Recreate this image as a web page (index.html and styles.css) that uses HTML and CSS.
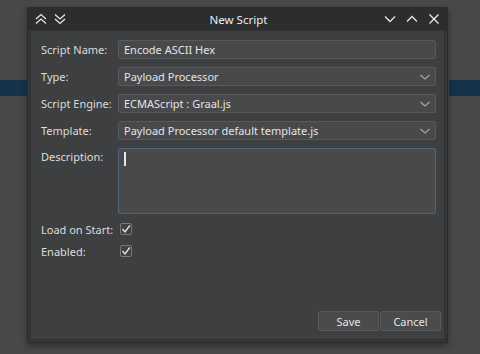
FILE: index.html
```html
<!DOCTYPE html>
<html lang="en">
<head>
    <meta charset="UTF-8">
    <title>New Script</title>
    <link rel="stylesheet" href="styles.css">
</head>
<body>
    <div class="backdrop">
        <div class="strip strip-left"></div>
        <div class="strip strip-right"></div>

        <div class="dialog">
            <div class="titlebar">
                <div class="tb-left">
                    <svg width="14" height="12" viewBox="0 0 14 12"><path d="M2 6 L7 1.5 L12 6 M2 10.5 L7 6 L12 10.5" fill="none" stroke="#e6e6e6" stroke-width="1.3"/></svg>
                    <svg width="14" height="12" viewBox="0 0 14 12"><path d="M2 1.5 L7 6 L12 1.5 M2 6 L7 10.5 L12 6" fill="none" stroke="#e6e6e6" stroke-width="1.3"/></svg>
                </div>
                <div class="title">New Script</div>
                <div class="tb-right">
                    <svg width="14" height="12" viewBox="0 0 14 12"><path d="M2 3.5 L7 8.5 L12 3.5" fill="none" stroke="#e6e6e6" stroke-width="1.3"/></svg>
                    <svg width="14" height="12" viewBox="0 0 14 12"><path d="M2 8.5 L7 3.5 L12 8.5" fill="none" stroke="#e6e6e6" stroke-width="1.3"/></svg>
                    <svg width="14" height="12" viewBox="0 0 14 12"><path d="M2.5 1.5 L11.5 10.5 M11.5 1.5 L2.5 10.5" fill="none" stroke="#e6e6e6" stroke-width="1.4"/></svg>
                </div>
            </div>

            <div class="body">
                <div class="form">
                    <div class="row">
                        <label>Script Name:</label>
                        <div class="field">Encode ASCII Hex</div>
                    </div>
                    <div class="row">
                        <label>Type:</label>
                        <div class="field combo">Payload Processor<span class="arrow"><svg width="12" height="8" viewBox="0 0 12 8"><path d="M1.5 2 L6 6 L10.5 2" fill="none" stroke="#a8a8a8" stroke-width="1.2"/></svg></span></div>
                    </div>
                    <div class="row">
                        <label>Script Engine:</label>
                        <div class="field combo">ECMAScript : Graal.js<span class="arrow"><svg width="12" height="8" viewBox="0 0 12 8"><path d="M1.5 2 L6 6 L10.5 2" fill="none" stroke="#a8a8a8" stroke-width="1.2"/></svg></span></div>
                    </div>
                    <div class="row">
                        <label>Template:</label>
                        <div class="field combo">Payload Processor default template.js<span class="arrow"><svg width="12" height="8" viewBox="0 0 12 8"><path d="M1.5 2 L6 6 L10.5 2" fill="none" stroke="#a8a8a8" stroke-width="1.2"/></svg></span></div>
                    </div>
                    <div class="row row-top">
                        <label>Description:</label>
                        <div class="field area"><span class="caret"></span></div>
                    </div>
                    <div class="row row-check">
                        <label>Load on Start:</label>
                        <span class="check"><svg width="10" height="10" viewBox="0 0 10 10"><path d="M1.5 5 L4 8 L8.8 1.5" fill="none" stroke="#e6e6e6" stroke-width="1.3"/></svg></span>
                    </div>
                    <div class="row row-check">
                        <label>Enabled:</label>
                        <span class="check"><svg width="10" height="10" viewBox="0 0 10 10"><path d="M1.5 5 L4 8 L8.8 1.5" fill="none" stroke="#e6e6e6" stroke-width="1.3"/></svg></span>
                    </div>
                </div>

                <div class="buttons">
                    <button class="btn">Save</button>
                    <button class="btn">Cancel</button>
                </div>
            </div>
        </div>
    </div>
</body>
</html>
```

FILE: styles.css
```css
* {
    margin: 0;
    padding: 0;
    box-sizing: border-box;
}

body {
    background: #46484a;
    font-family: 'Noto Sans', 'Open Sans', sans-serif;
    font-size: 11px;
    color: #e2e2e2;
    width: 480px;
    height: 354px;
    overflow: hidden;
}

.backdrop {
    position: relative;
    width: 480px;
    height: 354px;
    padding: 7px 0 0 27px;
}

/* blue bar of the window behind, showing at both sides */
.strip {
    position: absolute;
    top: 80px;
    height: 16px;
    background: #15324a;
}

.strip-left {
    left: 0;
    width: 27px;
}

.strip-right {
    left: 449px;
    width: 31px;
}

.dialog {
    position: relative;
    width: 421px;
    height: 336px;
    background: #343638;
    border: 1px solid #2a2c2e;
    box-shadow: 0 3px 6px rgba(0,0,0,0.35);
    display: flex;
    flex-direction: column;
}

.titlebar {
    height: 22px;
    background: #2b2d2f;
    display: flex;
    align-items: center;
    padding: 0 6px;
}

.tb-left, .tb-right {
    display: flex;
    gap: 5px;
    width: 80px;
}

.tb-right {
    justify-content: flex-end;
    gap: 8px;
}

.title {
    flex: 1;
    text-align: center;
    font-size: 11.5px;
    color: #ececec;
    padding-left: 2px;
}

.body {
    flex: 1;
    margin: 0 2px 2px 2px;
    background: #3d3f41;
    border: 1px solid #2f3133;
    display: flex;
    flex-direction: column;
    padding: 9px 8px 8px 10px;
}

.form {
    flex: 1;
    display: flex;
    flex-direction: column;
    gap: 8px;
}

.row {
    display: flex;
    align-items: center;
}

.row-top {
    align-items: flex-start;
}

.row label {
    width: 77px;
    color: #dcdcdc;
}

.row-top label {
    padding-top: 1px;
}

.field {
    flex: 1;
    height: 19px;
    background: #48494b;
    border: 1px solid #58595b;
    border-radius: 2px;
    padding: 0 5px;
    display: flex;
    align-items: center;
    color: #e4e4e4;
}

.combo {
    justify-content: space-between;
}

.arrow {
    display: flex;
    margin-right: -1px;
}

.area {
    height: 66px;
    border-color: #4e6680;
    align-items: flex-start;
    padding-top: 3px;
}

.caret {
    width: 1.5px;
    height: 14px;
    background: #e8e8e8;
}

.row-check {
    height: 12px;
    margin-top: 1px;
}

.row-check + .row-check {
    margin-top: 2px;
}

.check {
    width: 12px;
    height: 12px;
    margin-left: 2px;
    border: 1px solid #767779;
    border-radius: 2px;
    background: #3f4143;
    display: flex;
    align-items: center;
    justify-content: center;
}

.buttons {
    display: flex;
    justify-content: flex-end;
    margin-right: -5px;
}

.btn {
    width: 61px;
    height: 20px;
    background: #4a4b4d;
    border: 1px solid #58595b;
    border-radius: 2px;
    color: #e4e4e4;
    font-family: 'Noto Sans', 'Open Sans', sans-serif;
    font-size: 11px;
}

.btn + .btn {
    margin-left: 1px;
}
```
